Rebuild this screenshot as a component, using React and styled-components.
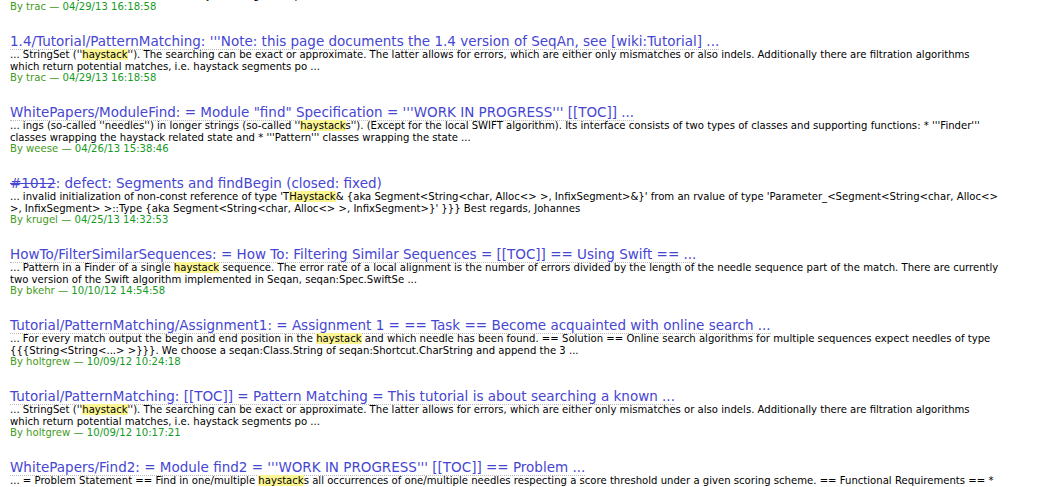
import React from 'react'
import styled, { createGlobalStyle } from 'styled-components'

const Global = createGlobalStyle`
  html, body {
    margin: 0;
    padding: 0;
    background: #fff;
  }
  body {
    font-family: "DejaVu Sans", Verdana, sans-serif;
    overflow: hidden;
  }
`

const results = [
  {
    title: "1.3/Tutorial/PatternMatching: '''Note: this page documents the 1.3 version of SeqAn ...",
    before: "... StringSet (''",
    word: 'haystack',
    after: "''). The searching can be exact or approximate. The latter allows for errors, which are either only mismatches or also indels. Additionally there are filtration algorithms which return potential matches, i.e. haystack segments po ...",
    author: 'trac',
    date: '04/29/13 16:18:58',
  },
  {
    title: "1.4/Tutorial/PatternMatching: '''Note: this page documents the 1.4 version of SeqAn, see [wiki:Tutorial] ...",
    before: "... StringSet (''",
    word: 'haystack',
    after: "''). The searching can be exact or approximate. The latter allows for errors, which are either only mismatches or also indels. Additionally there are filtration algorithms which return potential matches, i.e. haystack segments po ...",
    author: 'trac',
    date: '04/29/13 16:18:58',
  },
  {
    title: 'WhitePapers/ModuleFind: = Module "find" Specification = \'\'\'WORK IN PROGRESS\'\'\' [[TOC]] ...',
    before: "... ings (so-called ''needles'') in longer strings (so-called ''",
    word: 'haystack',
    after: "s''). (Except for the local SWIFT algorithm). Its interface consists of two types of classes and supporting functions: * '''Finder''' classes wrapping the haystack related state and * '''Pattern''' classes wrapping the state ...",
    author: 'weese',
    date: '04/26/13 15:38:46',
  },
  {
    ticket: '#1012',
    title: ': defect: Segments and findBegin (closed: fixed)',
    before: "... invalid initialization of non-const reference of type 'T",
    word: 'Haystack',
    after: "& {aka Segment<String<char, Alloc<> >, InfixSegment>&}' from an rvalue of type 'Parameter_<Segment<String<char, Alloc<> >, InfixSegment> >::Type {aka Segment<String<char, Alloc<> >, InfixSegment>}' }}} Best regards, Johannes",
    author: 'krugel',
    date: '04/25/13 14:32:53',
  },
  {
    title: 'HowTo/FilterSimilarSequences: = How To: Filtering Similar Sequences = [[TOC]] == Using Swift == ...',
    before: '... Pattern in a Finder of a single ',
    word: 'haystack',
    after: ' sequence. The error rate of a local alignment is the number of errors divided by the length of the needle sequence part of the match. There are currently two version of the Swift algorithm implemented in Seqan, seqan:Spec.SwiftSe ...',
    author: 'bkehr',
    date: '10/10/12 14:54:58',
  },
  {
    title: 'Tutorial/PatternMatching/Assignment1: = Assignment 1 = == Task == Become acquainted with online search ...',
    before: '... For every match output the begin and end position in the ',
    word: 'haystack',
    after: ' and which needle has been found. == Solution == Online search algorithms for multiple sequences expect needles of type {{{String<String<...> >}}}. We choose a seqan:Class.String of seqan:Shortcut.CharString and append the 3 ...',
    author: 'holtgrew',
    date: '10/09/12 10:24:18',
  },
  {
    title: 'Tutorial/PatternMatching: [[TOC]] = Pattern Matching = This tutorial is about searching a known ...',
    before: "... StringSet (''",
    word: 'haystack',
    after: "''). The searching can be exact or approximate. The latter allows for errors, which are either only mismatches or also indels. Additionally there are filtration algorithms which return potential matches, i.e. haystack segments po ...",
    author: 'holtgrew',
    date: '10/09/12 10:17:21',
  },
  {
    title: "WhitePapers/Find2: = Module find2 = '''WORK IN PROGRESS''' [[TOC]] == Problem ...",
    before: '... = Problem Statement == Find in one/multiple ',
    word: 'haystack',
    after: 's all occurrences of one/multiple needles respecting a score threshold under a given scoring scheme. == Functional Requirements == * ...',
    author: 'weese',
    date: '10/02/12 09:12:40',
  },
]

export default function App() {
  return (
    <>
      <Global />
      <Page>
        <Results>
          {results.map((r, i) => (
            <Result key={i}>
              <Title>
                <TitleLink href="#" $plain={!!r.ticket}>
                  {r.ticket && <Closed>{r.ticket}</Closed>}
                  {r.title}
                </TitleLink>
              </Title>
              <Excerpt>
                {r.before}
                <SearchWord>{r.word}</SearchWord>
                {r.after}
              </Excerpt>
              <Meta>
                <Author>By {r.author} —</Author> <DateText>{r.date}</DateText>
              </Meta>
            </Result>
          ))}
        </Results>
      </Page>
    </>
  )
}

const Page = styled.div`
  height: 487px;
  overflow: hidden;
  padding-left: 10px;
`

// the list is scrolled: the previous hit is only partly in view
const Results = styled.div`
  width: 990px;
  margin-top: -38px;
  display: flex;
  flex-direction: column;
  gap: 20.5px;
`

const Result = styled.div`
  display: flex;
  flex-direction: column;
`

const Title = styled.div`
  font-size: 13.5px;
  line-height: 16px;
  white-space: nowrap;
`

const TitleLink = styled.a`
  color: #4646d2;
  text-decoration: none;
  border-bottom: 1px dotted ${p => (p.$plain ? 'transparent' : '#bbb')};
`

const Closed = styled.span`
  text-decoration: line-through;
`

const Excerpt = styled.div`
  font-size: 10.1px;
  line-height: 11.5px;
  color: #000;
`

const SearchWord = styled.span`
  background: #fbf592;
`

const Meta = styled.div`
  font-size: 10.1px;
  line-height: 11.5px;
`

const Author = styled.span`
  color: #3f9a1a;
`

const DateText = styled.span`
  color: #179a24;
`
